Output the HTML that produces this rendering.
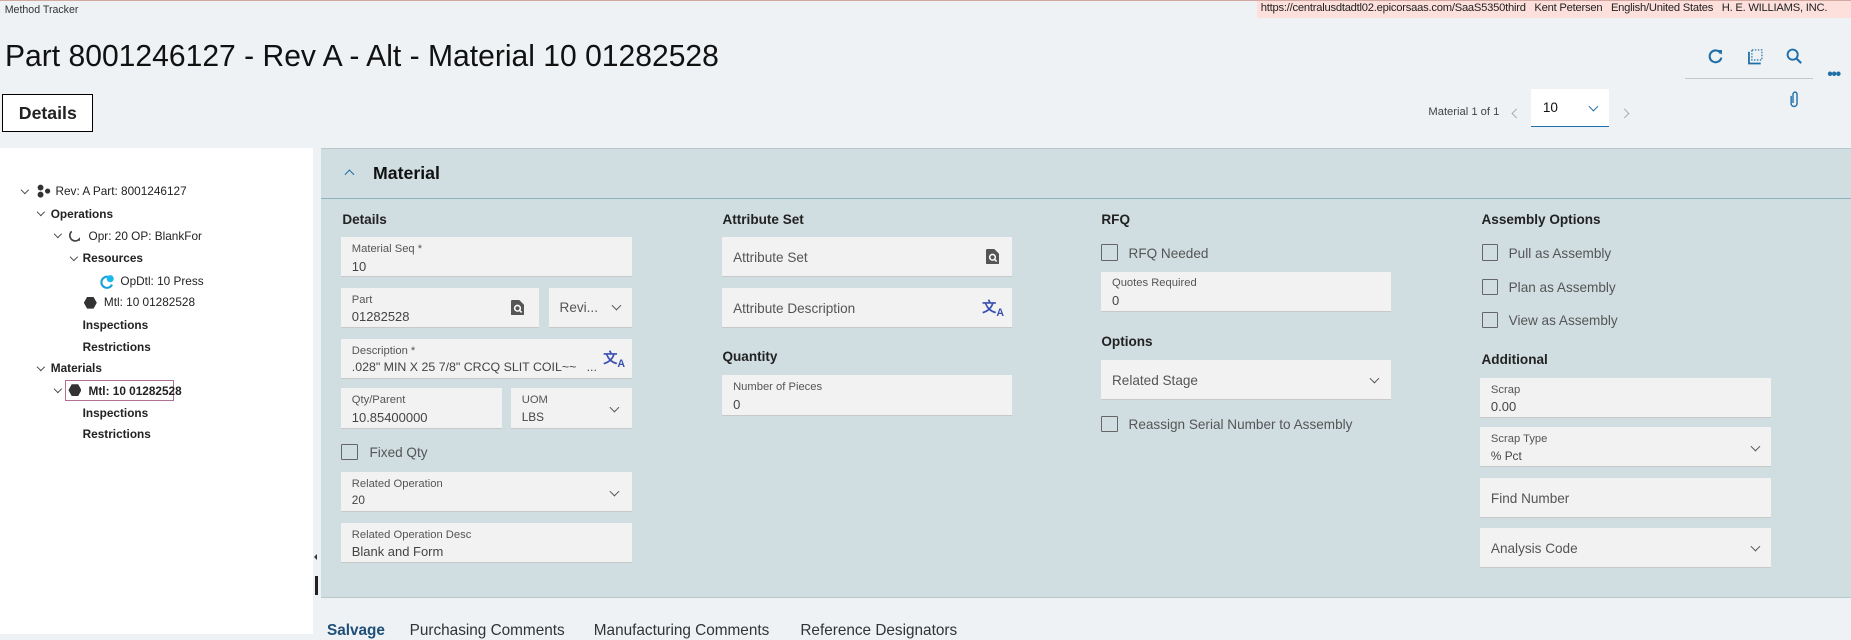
<!DOCTYPE html>
<html><head><meta charset="utf-8">
<style>
html,body{margin:0;padding:0;width:1851px;height:634px;overflow:hidden;background:#eef2f5}
#w{position:absolute;left:0;top:0;width:1568px;height:537px;zoom:1.18048;font-family:"Liberation Sans",sans-serif;color:#222}
.a{position:absolute;white-space:nowrap}
.f{position:absolute;background:#f2f2f2;border-bottom:1px solid #c8c8c8;box-sizing:border-box;height:34px}
.f .l{position:absolute;left:9px;top:5px;font-size:9.5px;color:#555}
.f .v{position:absolute;left:9px;top:18px;font-size:11px;color:#444}
.f .p{position:absolute;left:9px;top:11px;font-size:11.5px;color:#555}
.chev{position:absolute;width:5px;height:5px;border-right:1.3px solid #555;border-bottom:1.3px solid #555;transform:rotate(45deg)}
.h{position:absolute;font-size:11.5px;font-weight:bold;color:#222}
.cb{position:absolute;width:12px;height:12px;border:1.5px solid #666;border-radius:1px;box-sizing:border-box}
.ct{position:absolute;font-size:11.5px;color:#555;white-space:nowrap}
.t{position:absolute;font-size:10px;white-space:nowrap;color:#222}
.tb{font-weight:bold}
.tc{position:absolute;width:4px;height:4px;border-right:1px solid #444;border-bottom:1px solid #444;transform:rotate(45deg)}
.hex{position:absolute;width:11px;height:11px;background:#333;clip-path:polygon(25% 5%,75% 5%,100% 50%,75% 95%,25% 95%,0 50%)}
</style></head><body><div id="w">
<div class="a" style="left:0;top:0;width:1568px;height:1px;background:#d4a8a0"></div>
<div class="t" style="left:4px;top:3px;font-size:9px;color:#333">Method Tracker</div>
<div class="a" style="left:1065px;top:1px;width:503px;height:14px;background:#fde0dc"></div>
<div class="t" style="left:1068px;top:2px;font-size:9.5px;color:#222;letter-spacing:-0.2px">https://centralusdtadtl02.epicorsaas.com/SaaS5350third&nbsp;&nbsp;&nbsp;Kent Petersen&nbsp;&nbsp;&nbsp;English/United States&nbsp;&nbsp;&nbsp;H. E. WILLIAMS, INC.</div>

<div class="a" style="left:4px;top:32px;font-size:26px;color:#111;transform:scaleX(0.98);transform-origin:left">Part 8001246127 - Rev A - Alt - Material 10 01282528</div>

<div class="a" style="left:2px;top:80px;width:77px;height:32px;border:1px solid #000;background:#fff;box-sizing:border-box;font-size:15px;font-weight:bold;text-align:center;line-height:32px">Details</div>

<svg class="a" style="left:1445px;top:40px" width="16" height="16" viewBox="0 0 16 16"><path d="M12.5 5.5A5 5 0 1 0 13 9" fill="none" stroke="#1f6fa8" stroke-width="1.8"/><path d="M9.5 2.5h4v4z" fill="#1f6fa8"/></svg>
<svg class="a" style="left:1479px;top:40px" width="16" height="16" viewBox="0 0 16 16"><rect x="5" y="2.5" width="8.5" height="8.5" fill="none" stroke="#1f6fa8" stroke-dasharray="1.3 1.2"/><path d="M2.5 4v10h10" fill="none" stroke="#1f6fa8" stroke-width="1.5"/></svg>
<svg class="a" style="left:1512px;top:40px" width="16" height="16" viewBox="0 0 16 16"><circle cx="6.5" cy="6.5" r="4.3" fill="none" stroke="#1f6fa8" stroke-width="1.6"/><path d="M9.7 9.7l4 4" stroke="#1f6fa8" stroke-width="1.8"/></svg>
<div class="a" style="left:1427px;top:66px;width:109px;height:1px;background:#c8c8c8"></div>
<div class="a" style="left:1548px;top:56px;font-size:13px;color:#1f6fa8;font-weight:bold;letter-spacing:-1px">•••</div>
<svg class="a" style="left:1514px;top:76px" width="12" height="16" viewBox="0 0 12 16"><path d="M3.5 5v6.5a2.5 2.5 0 0 0 5 0V3.5a1.7 1.7 0 0 0-3.4 0V11" fill="none" stroke="#1f6fa8" stroke-width="1.2"/></svg>
<div class="t" style="left:1210px;top:90px;font-size:9.5px;color:#444">Material 1 of 1</div>
<div class="tc" style="left:1282px;top:93px;transform:rotate(135deg);border-color:#aaa;width:5px;height:5px"></div>
<div class="a" style="left:1297px;top:75px;width:66px;height:33px;background:#fff;border-bottom:1.5px solid #1f6fa8;box-sizing:border-box"></div>
<div class="t" style="left:1307px;top:85px;font-size:11.5px;color:#111">10</div>
<div class="tc" style="left:1347px;top:87px;border-color:#1f6fa8;width:5px;height:5px"></div>
<div class="tc" style="left:1373px;top:93px;transform:rotate(-45deg);border-color:#aaa;width:5px;height:5px"></div>

<div class="a" style="left:0;top:125px;width:265px;height:412px;background:#fff"></div>
<div class="tc" style="left:19px;top:158px"></div>
<svg class="a" style="left:31px;top:156px" width="12" height="12"><circle cx="3" cy="3" r="2.5" fill="#333"/><circle cx="3" cy="9" r="2.5" fill="#333"/><circle cx="9" cy="6" r="2.2" fill="#333"/></svg>
<div class="t" style="left:47px;top:156px">Rev: A Part: 8001246127</div>
<div class="tc" style="left:32px;top:177px"></div>
<div class="t tb" style="left:43px;top:175px">Operations</div>
<div class="tc" style="left:47px;top:196px"></div>
<svg class="a" style="left:57px;top:194px" width="12" height="12"><path d="M4 2A4.5 4.5 0 1 0 10 9" fill="none" stroke="#444" stroke-width="1.4"/><path d="M8 10l3 0 0-3z" fill="#444"/></svg>
<div class="t" style="left:75px;top:194px">Opr: 20 OP: BlankFor</div>
<div class="tc" style="left:60px;top:215px"></div>
<div class="t tb" style="left:70px;top:213px">Resources</div>
<svg class="a" style="left:84px;top:232px" width="13" height="13"><path d="M8 2.5A4.7 4.7 0 1 0 11 9" fill="none" stroke="#1aa0d8" stroke-width="1.8"/><circle cx="9.5" cy="4" r="3" fill="#1ab8ee"/></svg>
<div class="t" style="left:102px;top:232px">OpDtl: 10 Press</div>
<div class="hex" style="left:71px;top:251px"></div>
<div class="t" style="left:88px;top:250px">Mtl: 10 01282528</div>
<div class="t tb" style="left:70px;top:269px">Inspections</div>
<div class="t tb" style="left:70px;top:288px">Restrictions</div>
<div class="tc" style="left:32px;top:308px"></div>
<div class="t tb" style="left:43px;top:306px">Materials</div>
<div class="tc" style="left:47px;top:327px"></div>
<div class="a" style="left:55px;top:322px;width:92px;height:18px;border:1px solid #b07090;box-sizing:border-box"></div>
<div class="hex" style="left:58px;top:325px"></div>
<div class="t tb" style="left:75px;top:325px">Mtl: 10 01282528</div>
<div class="t tb" style="left:70px;top:344px">Inspections</div>
<div class="t tb" style="left:70px;top:362px">Restrictions</div>

<div class="a" style="left:266px;top:469px;width:0;height:0;border-top:3px solid transparent;border-bottom:3px solid transparent;border-right:3px solid #333"></div>
<div class="a" style="left:267px;top:488px;width:2px;height:16px;background:#222"></div>

<div class="a" style="left:272px;top:125px;width:1296px;height:382px;background:#d0dee2;border-top:1px solid #b8c8cc;border-bottom:1px solid #b8c8cc;box-sizing:border-box"></div>
<div class="a" style="left:272px;top:168px;width:1296px;height:1px;background:#8fb0bd"></div>
<div class="tc" style="left:293px;top:145px;transform:rotate(-135deg);border-color:#1f6fa8;border-width:1.6px;width:5px;height:5px"></div>
<div class="a" style="left:316px;top:138px;font-size:15px;font-weight:bold;color:#111">Material</div>

<div class="h" style="left:290px;top:180px">Details</div>
<div class="f" style="left:289px;top:201px;width:246px"><div class="l">Material Seq *</div><div class="v">10</div></div>
<div class="f" style="left:289px;top:244px;width:168px"><div class="l">Part</div><div class="v">01282528</div>
<svg style="position:absolute;left:144px;top:10px" width="11" height="13"><path d="M0 1a1 1 0 0 1 1-1h6l4 4v8a1 1 0 0 1-1 1H1a1 1 0 0 1-1-1z" fill="#555"/><circle cx="5.5" cy="7" r="2.4" fill="none" stroke="#fff" stroke-width="1.3"/><path d="M7 8.5l2 2" stroke="#fff" stroke-width="1.3"/></svg></div>
<div class="f" style="left:465px;top:244px;width:70px"><div class="p" style="top:10px;color:#555">Revi...</div><div class="chev" style="left:54px;top:12px"></div></div>
<div class="f" style="left:289px;top:287px;width:246px"><div class="l">Description *</div><div class="v" style="font-size:10.5px">.028" MIN X 25 7/8" CRCQ SLIT COIL~~&nbsp;&nbsp;&nbsp;...</div>
<div class="a" style="left:222px;top:8px;font-size:12px;color:#3a50b0;font-weight:bold">文<sub style="font-size:9px">A</sub></div></div>
<div class="f" style="left:289px;top:329px;width:136px"><div class="l">Qty/Parent</div><div class="v">10.85400000</div></div>
<div class="f" style="left:433px;top:329px;width:102px"><div class="l">UOM</div><div class="v" style="font-size:10px">LBS</div><div class="chev" style="left:85px;top:13px"></div></div>
<div class="cb" style="left:289px;top:376px;width:14px;height:14px"></div>
<div class="ct" style="left:313px;top:377px">Fixed Qty</div>
<div class="f" style="left:289px;top:400px;width:246px"><div class="l">Related Operation</div><div class="v" style="font-size:10px">20</div><div class="chev" style="left:229px;top:13px"></div></div>
<div class="f" style="left:289px;top:443px;width:246px"><div class="l">Related Operation Desc</div><div class="v">Blank and Form</div></div>

<div class="h" style="left:612px;top:180px">Attribute Set</div>
<div class="f" style="left:612px;top:201px;width:245px"><div class="p">Attribute Set</div>
<svg style="position:absolute;left:223px;top:10px" width="11" height="13"><path d="M0 1a1 1 0 0 1 1-1h6l4 4v8a1 1 0 0 1-1 1H1a1 1 0 0 1-1-1z" fill="#555"/><circle cx="5.5" cy="7" r="2.4" fill="none" stroke="#fff" stroke-width="1.3"/><path d="M7 8.5l2 2" stroke="#fff" stroke-width="1.3"/></svg></div>
<div class="f" style="left:612px;top:244px;width:245px"><div class="p">Attribute Description</div>
<div class="a" style="left:220px;top:8px;font-size:12px;color:#3a50b0;font-weight:bold">文<sub style="font-size:9px">A</sub></div></div>
<div class="h" style="left:612px;top:296px">Quantity</div>
<div class="f" style="left:612px;top:318px;width:245px"><div class="l">Number of Pieces</div><div class="v">0</div></div>

<div class="h" style="left:933px;top:180px">RFQ</div>
<div class="cb" style="left:933px;top:207px;width:14px;height:14px"></div>
<div class="ct" style="left:956px;top:208px">RFQ Needed</div>
<div class="f" style="left:933px;top:230px;width:245px"><div class="l">Quotes Required</div><div class="v">0</div></div>
<div class="h" style="left:933px;top:283px">Options</div>
<div class="f" style="left:933px;top:305px;width:245px"><div class="p">Related Stage</div><div class="chev" style="left:228px;top:13px"></div></div>
<div class="cb" style="left:933px;top:352px;width:14px;height:14px"></div>
<div class="ct" style="left:956px;top:353px">Reassign Serial Number to Assembly</div>

<div class="h" style="left:1255px;top:180px">Assembly Options</div>
<div class="cb" style="left:1255px;top:207px;width:14px;height:14px"></div>
<div class="ct" style="left:1278px;top:208px">Pull as Assembly</div>
<div class="cb" style="left:1255px;top:236px;width:14px;height:14px"></div>
<div class="ct" style="left:1278px;top:237px">Plan as Assembly</div>
<div class="cb" style="left:1255px;top:264px;width:14px;height:14px"></div>
<div class="ct" style="left:1278px;top:265px">View as Assembly</div>
<div class="h" style="left:1255px;top:298px">Additional</div>
<div class="f" style="left:1254px;top:320px;width:246px"><div class="l">Scrap</div><div class="v">0.00</div></div>
<div class="f" style="left:1254px;top:362px;width:246px"><div class="l">Scrap Type</div><div class="v" style="font-size:10px">% Pct</div><div class="chev" style="left:230px;top:13px"></div></div>
<div class="f" style="left:1254px;top:405px;width:246px"><div class="p">Find Number</div></div>
<div class="f" style="left:1254px;top:447px;width:246px"><div class="p">Analysis Code</div><div class="chev" style="left:230px;top:13px"></div></div>

<div class="a" style="left:277px;top:527px;font-size:13px;font-weight:bold;color:#1f4f78">Salvage</div>
<div class="a" style="left:347px;top:527px;font-size:13px;color:#333">Purchasing Comments</div>
<div class="a" style="left:503px;top:527px;font-size:13px;color:#333">Manufacturing Comments</div>
<div class="a" style="left:678px;top:527px;font-size:13px;color:#333">Reference Designators</div>
</div></body></html>
